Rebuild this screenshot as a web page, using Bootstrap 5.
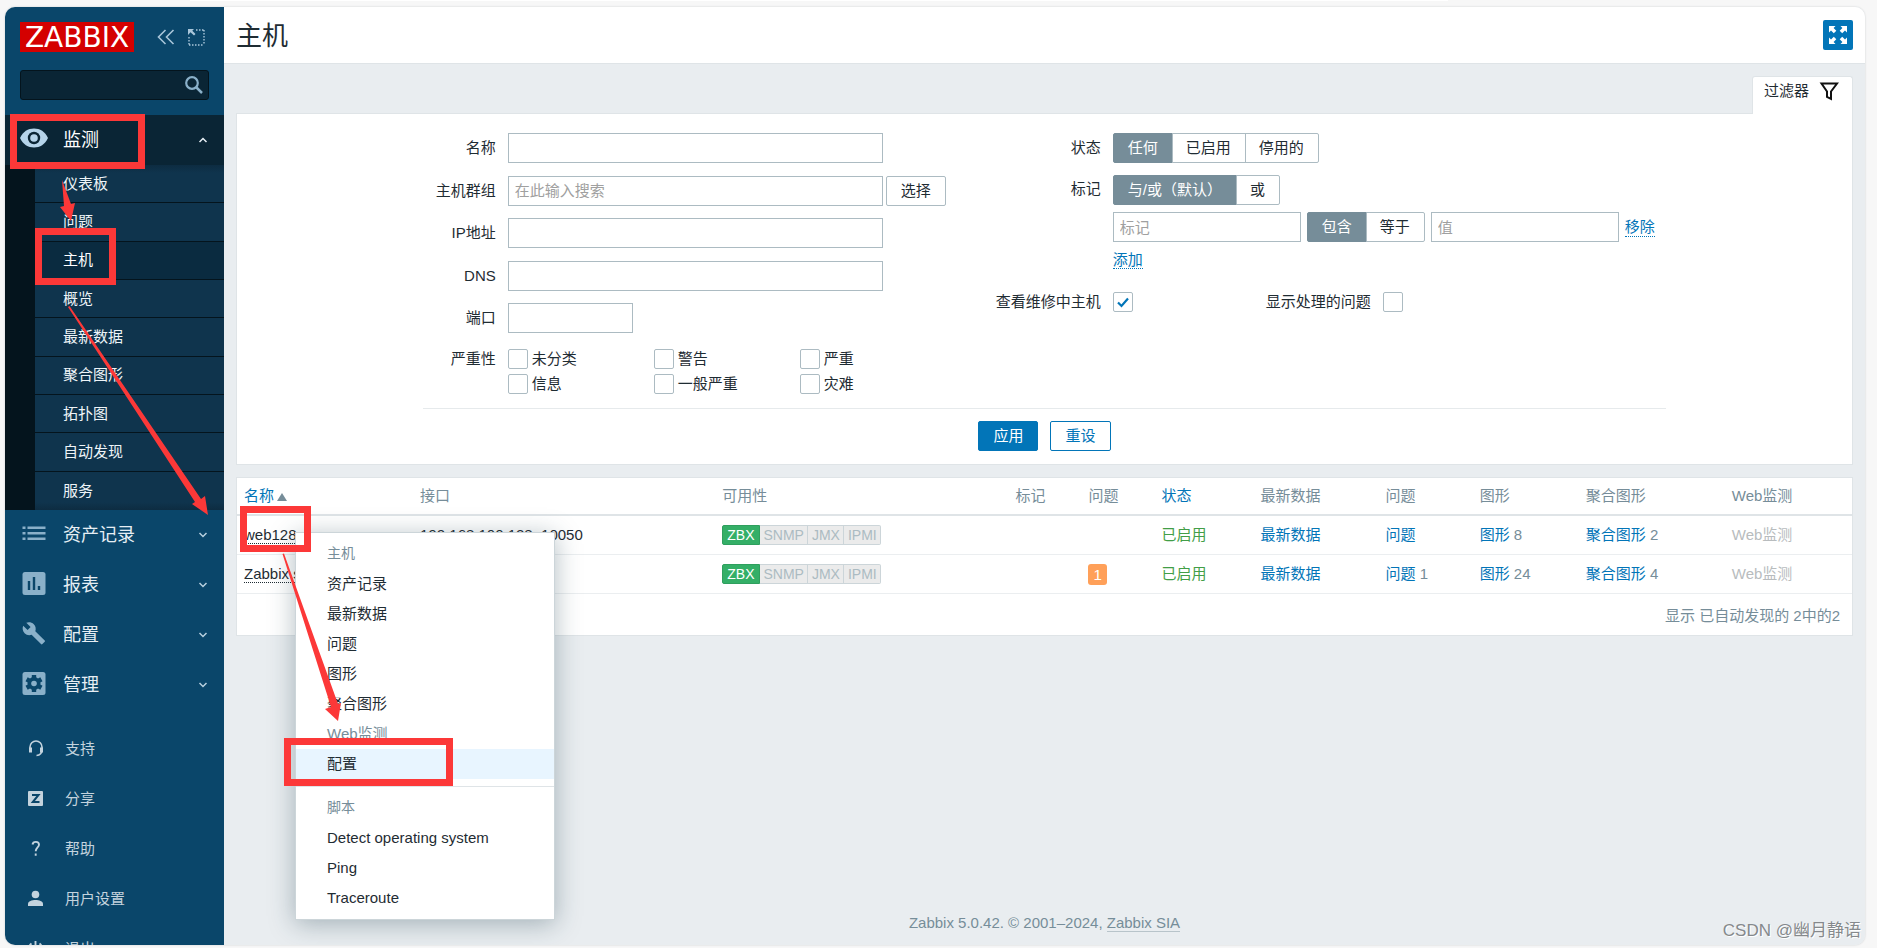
<!DOCTYPE html>
<html lang="zh-CN">
<head>
<meta charset="utf-8">
<meta name="viewport" content="width=device-width, initial-scale=1">
<title>主机</title>
<link href="https://cdn.jsdelivr.net/npm/bootstrap@5.3.0/dist/css/bootstrap.min.css" rel="stylesheet">
<style>
:root{--zline:#dfe4e7;--zlink:#0275b8;--zgrey:#768d99;--zink:#1f2c33;--zfield:#acbbc2;--zred:#fc3838}
body{font-family:"Liberation Sans","Noto Sans CJK SC",sans-serif;font-size:15px;line-height:20px;color:var(--zink);background:#f7f7f7;min-height:100vh;overflow:hidden;position:relative}
a{color:var(--zlink);text-decoration:none}
.tabstrip{position:absolute;top:0;left:190px;width:67%;height:1px;background:#fff}
.frame{position:absolute;inset:7px 12px 3px 5px;border-radius:10px;overflow:hidden;box-shadow:0 0 2px #c4c8ca}
/* sidebar */
.side{width:219px;background:#0a466a;overflow:hidden}
.brand{height:108px;padding:15px 15px 0}
.logo{width:114px;height:30px;background:#d40000;color:#fff;font:28px/31px "DejaVu Sans",sans-serif;text-align:center}
.search{width:189px;height:30px;margin-top:18px;background:#0a2535;border:1px solid #04141d;border-radius:3px}
.search input{background:none;border:0;outline:0;width:145px;color:#fff}
.menu-top{height:50px;padding:0 16px 0 15px;color:#e6eef4;font-size:18px}
.menu-top .ico{width:28px;height:28px;margin-right:15px}
.menu-top.open{background:#0a2535;color:#fff}
.submenu{min-height:345px;background:#04141d;padding-left:30px;display:grid;grid-auto-rows:1fr}
.submenu a{color:#eef4f8;background:#0f344d;padding-left:28px;border-bottom:1px solid #04141d}
.submenu a:first-child{background:linear-gradient(#0d2c41,#0f344d 8px)}
.submenu a.sel{background:#0a2b40;color:#fff}
.submenu a:last-child{border:0;background:linear-gradient(#0f344d 80%,#0d2c41)}
.menu-low{height:50px;padding-left:18px;color:#c3d3de}
.menu-low .ico{width:18px;height:18px;margin-right:20px}
/* page */
.page{background:#e9edf0;position:relative;min-width:0}
.titlebar{height:57px;background:#fff;border-bottom:1px solid var(--zline);padding:0 12px}
.titlebar h1{font-size:26px;line-height:30px;font-weight:400;margin:0;padding-top:2px}
.full{width:30px;height:30px;background:var(--zlink);border:0;border-radius:2px;padding:0}
.ftab{height:38px;margin-bottom:-1px;background:#fff;border:1px solid var(--zline);border-bottom:0;border-radius:3px 3px 0 0;padding:0 11px 9px 11px;color:var(--zink);position:relative}
.panel{background:#fff;border:1px solid var(--zline)}
.filter{height:352px;padding-top:19px}
.form-body{width:77%;margin:0 auto}
.left-col{width:561px}
.fields{height:200px}
.lab-l{width:73px;text-align:right;margin-right:12px;white-space:nowrap}
.lab-r{width:105px;text-align:right;margin-right:12px;white-space:nowrap}
.box{height:30px;border:1px solid var(--zfield);border-radius:0;padding:0 6px;font-size:15px;background:#fff;color:var(--zink)}
.box::placeholder{color:#a0a0a0}
.w375{width:375px}.w125{width:125px}.w188{width:188px}
.zbtn{height:30px;font-size:15px;line-height:20px;padding:0 14px;border:1px solid var(--zfield);border-radius:2px;background:#fff;color:var(--zink)}
.pick{margin-left:3px}
.zbtn.blue{border-color:var(--zlink);color:var(--zlink)}
.zbtn.solid{background:var(--zlink);border-color:var(--zlink);color:#fff}
.seg input{position:absolute;opacity:0;pointer-events:none}
.seg label{height:30px;padding:4px 14px 4px 13px;border:1px solid var(--zfield);margin-left:-1px;white-space:nowrap}
.seg label:first-of-type{margin-left:0;padding-left:14px;border-radius:2px 0 0 2px}
.seg label:last-of-type{border-radius:0 2px 2px 0}
.seg input:checked+label{background:var(--zgrey);border-color:var(--zgrey);color:#fff}
.tick{appearance:none;width:20px;height:20px;border:1px solid var(--zfield);border-radius:2px;background:#fff;margin:0;flex:none}
.tick:checked{background:#fff url("data:image/svg+xml,%3Csvg xmlns='http://www.w3.org/2000/svg' viewBox='0 0 18 18'%3E%3Cpath d='M4 9.5l3.5 3.5L14 5.5' fill='none' stroke='%230275b8' stroke-width='2.2'/%3E%3C/svg%3E")}
.sev{display:grid;grid-template-columns:repeat(3,146px);row-gap:5px}
.dotted{border-bottom:1px dotted var(--zlink);line-height:18px}
.rule{height:1px;background:#e6eaec}
/* data table */
.hosts{table-layout:fixed;width:100%;margin:0;white-space:nowrap}
.hosts th{font-weight:400;color:var(--zgrey);height:37px;padding:0 7px;border-bottom:2px solid var(--zline)}
.hosts td{height:39px;padding:0 7px;border-bottom:1px solid #ebeef0}
.hosts tfoot td{height:42px;border:0;text-align:right;color:var(--zgrey);padding:3px 12px 0}
.c1{width:176px}.c2{width:302px}.c3{width:293px}.c4{width:73px}.c5{width:73px}.c6{width:99px}.c7{width:125px}.c8{width:94px}.c9{width:106px}.c10{width:146px}.c11{width:127px}
.host{color:var(--zink);border-bottom:1px dotted var(--zink);line-height:18px}
.num{color:var(--zgrey)}
.off{color:#b8bcbe}
.on{color:#429e47}
.avail{font-size:14px;line-height:18px}
.avail span{background:#ebebeb;color:#acbbc2;border:1px solid #ccd5d9;border-left-width:0;padding:0 3px 0 4px}
.avail span:first-child{background:#34af67;border:1px solid #2f9f5e;color:#fff;border-radius:2px 0 0 2px;padding:0 4px}
.avail span:last-child{border-radius:0 2px 2px 0}
.sevnum{background:#ffa059;color:#fff;border-radius:3px;padding:0 5px;display:inline-block;line-height:21px;vertical-align:middle;margin-top:2px}
.foot{color:var(--zgrey);margin-bottom:12px}
.foot a{color:var(--zgrey);border-bottom:1px solid #b8c4ca}
/* context menu */
.ctx{position:absolute;left:71px;top:525px;width:260px;background:#fff;border:1px solid #ccd5d9;box-shadow:0 4px 24px rgba(31,62,76,.35);padding:6px 0;z-index:2}
.ctx a,.ctx .hd{display:block;height:30px;line-height:30px;padding-left:31px;color:var(--zink)}
.ctx .hd{font-size:14px;line-height:28px;color:var(--zgrey)}
.ctx .dis{color:var(--zgrey)}
.ctx .hov{background:#e8f5ff}
.ctx hr{margin:7px 0 6px;border-color:#dfe4e7;opacity:1}
.marks{position:absolute;inset:0;width:100%;height:100%;pointer-events:none;z-index:5}
.stamp{position:absolute;right:16px;bottom:6px;font-size:17px;line-height:22px;color:#85898c;text-shadow:1px 1px 0 #fff;z-index:6}
</style>
</head>
<body>
<div class="tabstrip"></div>
<div class="frame d-flex">
  <nav class="side flex-shrink-0">
    <div class="brand">
      <div class="d-flex align-items-center">
        <div class="logo">ZABBIX</div>
        <svg class="ms-auto" width="18" height="16" viewBox="0 0 18 16" fill="none" stroke="#a9c6da" stroke-width="1.6"><path d="M8.500 1L1.500 8l7 7M16.500 1l-7 7 7 7"/></svg>
        <svg class="me-1" width="17" height="17" viewBox="0 0 17 17" fill="none" stroke="#a9c6da" style="margin-left:13px"><path d="M8 1h9M16 1v15M1 16h15M1 8v8" stroke-width="1.400" stroke-dasharray="1.500 1.500"/><path d="M0 0h6L4.300 1.700 7.500 5 6 6.500 2.500 3.200 0 6z" fill="#a9c6da" stroke="none"/></svg>
      </div>
      <div class="search d-flex align-items-center">
        <input type="text" class="ms-2" aria-label="搜索">
        <svg class="ms-auto me-1" width="20" height="20" viewBox="0 0 20 20" fill="none" stroke="#8ab0c9"><circle cx="8" cy="8" r="5.800" stroke-width="2.200"/><path d="M12 12l6 6" stroke-width="2.500"/></svg>
      </div>
    </div>
    <a href="#" class="menu-top open d-flex align-items-center">
      <svg class="ico" viewBox="0 0 28 28"><path d="M0 12C3 5.500 8 2.500 14 2.500S25 5.500 28 12c-3 6.500-8 9.500-14 9.500S3 18.500 0 12z" fill="#b5d4ea"/><circle cx="14" cy="12" r="6.200" fill="#0a2535"/><circle cx="14" cy="12" r="3.800" fill="#b5d4ea"/></svg>
      <span>监测</span><svg class="ms-auto" width="10" height="8" viewBox="0 0 10 8" fill="none" stroke="#e6eef4" stroke-width="1.500"><path d="M1.500 6L5 2.500 8.500 6"/></svg></a>
    <div class="submenu">
      <a href="#" class="d-flex align-items-center">仪表板</a>
      <a href="#" class="d-flex align-items-center">问题</a>
      <a href="#" class="d-flex align-items-center sel">主机</a>
      <a href="#" class="d-flex align-items-center">概览</a>
      <a href="#" class="d-flex align-items-center">最新数据</a>
      <a href="#" class="d-flex align-items-center">聚合图形</a>
      <a href="#" class="d-flex align-items-center">拓扑图</a>
      <a href="#" class="d-flex align-items-center">自动发现</a>
      <a href="#" class="d-flex align-items-center">服务</a>
    </div>
    <a href="#" class="menu-top d-flex align-items-center">
      <svg class="ico" viewBox="0 0 28 28" fill="#8ab0c9"><path d="M2.500 5.500h3v2.500h-3zM2.500 11h3v2.500h-3zM2.500 16.500h3v2.500h-3zM7.500 5.500h18v2.500h-18zM7.500 11h18v2.500h-18zM7.500 16.500h18v2.500h-18z"/></svg>
      <span>资产记录</span><svg class="ms-auto" width="10" height="8" viewBox="0 0 10 8" fill="none" stroke="#b9d0df" stroke-width="1.500"><path d="M1.500 2L5 5.500 8.500 2"/></svg></a>
    <a href="#" class="menu-top d-flex align-items-center">
      <svg class="ico" viewBox="0 0 28 28"><rect x="2.500" y="1" width="23" height="23" rx="2.500" fill="#8ab0c9"/><path d="M9 10v9M14 6v13M19 15v4" stroke="#0a466a" stroke-width="2.400"/></svg>
      <span>报表</span><svg class="ms-auto" width="10" height="8" viewBox="0 0 10 8" fill="none" stroke="#b9d0df" stroke-width="1.500"><path d="M1.500 2L5 5.500 8.500 2"/></svg></a>
    <a href="#" class="menu-top d-flex align-items-center">
      <svg class="ico" viewBox="0 0 28 28"><path transform="translate(2.500 1)" d="M22.200 18.600L12.800 9.200c.9-2.400.4-5.100-1.500-7C9.200.2 6.200-.2 3.800.8l4.300 4.300-3 3L.7 3.800C-.4 6.200.1 9.200 2.100 11.200c1.900 1.900 4.600 2.400 7 1.500l9.400 9.400c.4.4 1 .4 1.400 0l2.300-2.300c.5-.4.5-1 0-1.200z" fill="#8ab0c9"/></svg>
      <span>配置</span><svg class="ms-auto" width="10" height="8" viewBox="0 0 10 8" fill="none" stroke="#b9d0df" stroke-width="1.500"><path d="M1.500 2L5 5.500 8.500 2"/></svg></a>
    <a href="#" class="menu-top d-flex align-items-center">
      <svg class="ico" viewBox="0 0 28 28"><rect x="2.500" y="1" width="23" height="23" rx="2.500" fill="#8ab0c9"/><circle cx="14" cy="12.500" r="6.500" fill="#0a466a"/><path d="M14 4v17M6.600 8.250l14.800 8.500M6.600 16.750l14.800-8.500" stroke="#0a466a" stroke-width="4.400"/><circle cx="14" cy="12.500" r="2.800" fill="#8ab0c9"/></svg>
      <span>管理</span><svg class="ms-auto" width="10" height="8" viewBox="0 0 10 8" fill="none" stroke="#b9d0df" stroke-width="1.500"><path d="M1.500 2L5 5.500 8.500 2"/></svg></a>
    <div style="margin-top:14px">
      <a href="#" class="menu-low d-flex align-items-center"><svg class="ico ms-1" viewBox="0 0 18 18" fill="none" stroke="#c3d3de"><path d="M3 9V7a6 6 0 0 1 12 0v2c0 4-1 6.500-5.500 6.500" stroke-width="1.600"/><path d="M3.500 7.500v5M14.500 7.500v5" stroke-width="3"/></svg>支持</a>
      <a href="#" class="menu-low d-flex align-items-center"><svg class="ico ms-1" viewBox="0 0 18 18"><rect x="1" y="1" width="15" height="15" rx="1" fill="#c3d3de"/><path d="M5 5h6.500L5.800 12H12.500" fill="none" stroke="#0a466a" stroke-width="2"/></svg>分享</a>
      <a href="#" class="menu-low d-flex align-items-center"><svg class="ico ms-1" viewBox="0 0 18 18" fill="none" stroke="#c3d3de" stroke-width="1.900"><path d="M5.500 4.500C6 1 12 1 12 4.700c0 2.500-3.300 3-3.300 6.500M8.700 13.500v2.200"/></svg>帮助</a>
      <a href="#" class="menu-low d-flex align-items-center"><svg class="ico ms-1" viewBox="0 0 18 18" fill="#c3d3de"><circle cx="8.500" cy="4.500" r="3.800"/><path d="M1 16v-2c0-3 4-4 7.500-4s7.500 1 7.500 4v2z"/></svg>用户设置</a>
      <a href="#" class="menu-low d-flex align-items-center"><svg class="ico ms-1" viewBox="0 0 18 18" fill="none" stroke="#c3d3de" stroke-width="1.900"><path d="M8.500 1v8M4.500 3.500a6.500 6.500 0 1 0 8 0"/></svg>退出</a>
    </div>
  </nav>

  <main class="page flex-grow-1 d-flex flex-column">
    <header class="titlebar d-flex align-items-center justify-content-between">
      <h1>主机</h1>
      <button type="button" class="full d-flex align-items-center justify-content-center" aria-label="全屏"><svg width="18" height="18" viewBox="0 0 18 18" fill="#fff"><path id="arr" d="M0 0h6.500L4.600 2 7.300 4.800 4.800 7.300 2 4.600 0 6.500z"/><use href="#arr" transform="rotate(90 9 9)"/><use href="#arr" transform="rotate(180 9 9)"/><use href="#arr" transform="rotate(270 9 9)"/></svg></button>
    </header>
    <div class="px-1 flex-grow-1 d-flex flex-column">
      <div class="mx-2 mt-2 pt-1 d-flex flex-column flex-grow-1">
        <div class="d-flex justify-content-end"><a href="#" class="ftab d-flex align-items-center">过滤器
          <svg class="ms-2" width="24" height="20" viewBox="0 0 24 20" fill="none" stroke="#111" stroke-width="2"><path d="M4.500 2.500h15.500l-6 8v7.500l-4-2v-5.500z"/></svg></a></div>
        <form class="panel filter" onsubmit="return false">
          <div class="form-body">
            <div class="d-flex">
              <div class="left-col flex-shrink-0">
                <div class="fields d-flex flex-column justify-content-between">
                  <div class="d-flex align-items-center"><label class="lab-l" for="f1">名称</label><input id="f1" class="box w375" type="text"></div>
                  <div class="d-flex align-items-center"><label class="lab-l" for="f2">主机群组</label><input id="f2" class="box w375" type="text" placeholder="在此输入搜索"><button type="button" class="zbtn pick">选择</button></div>
                  <div class="d-flex align-items-center"><label class="lab-l" for="f3">IP地址</label><input id="f3" class="box w375" type="text"></div>
                  <div class="d-flex align-items-center"><label class="lab-l" for="f4">DNS</label><input id="f4" class="box w375" type="text"></div>
                  <div class="d-flex align-items-center"><label class="lab-l" for="f5">端口</label><input id="f5" class="box w125" type="text"></div>
                </div>
                <div class="d-flex mt-3">
                  <span class="lab-l">严重性</span>
                  <div class="sev">
                    <label class="d-flex gap-1 align-items-center"><input type="checkbox" class="tick">未分类</label>
                    <label class="d-flex gap-1 align-items-center"><input type="checkbox" class="tick">警告</label>
                    <label class="d-flex gap-1 align-items-center"><input type="checkbox" class="tick">严重</label>
                    <label class="d-flex gap-1 align-items-center"><input type="checkbox" class="tick">信息</label>
                    <label class="d-flex gap-1 align-items-center"><input type="checkbox" class="tick">一般严重</label>
                    <label class="d-flex gap-1 align-items-center"><input type="checkbox" class="tick">灾难</label>
                  </div>
                </div>
              </div>
              <div style="margin-left:12px">
                <div class="d-flex align-items-center"><span class="lab-r">状态</span>
                  <div class="seg d-flex"><input type="radio" name="st" id="s1" checked><label for="s1">任何</label><input type="radio" name="st" id="s2"><label for="s2">已启用</label><input type="radio" name="st" id="s3"><label for="s3">停用的</label></div></div>
                <div class="d-flex" style="margin-top:12px"><span class="lab-r pt-1">标记</span>
                  <div>
                    <div class="seg d-flex"><input type="radio" name="tg" id="t1" checked><label for="t1">与/或（默认）</label><input type="radio" name="tg" id="t2"><label for="t2">或</label></div>
                    <div class="d-flex align-items-center" style="margin-top:7px;gap:6px">
                      <input class="box w188" type="text" placeholder="标记" aria-label="标记">
                      <div class="seg d-flex"><input type="radio" name="op" id="o1" checked><label for="o1">包含</label><input type="radio" name="op" id="o2"><label for="o2">等于</label></div>
                      <input class="box w188" type="text" placeholder="值" aria-label="值">
                      <a href="#" class="dotted text-nowrap">移除</a>
                    </div>
                    <div class="mt-2"><a href="#" class="dotted">添加</a></div>
                  </div>
                </div>
                <div class="d-flex align-items-center" style="margin-top:22px">
                  <label class="lab-r" for="m1">查看维修中主机</label><input id="m1" type="checkbox" class="tick" checked>
                  <label class="lab-r" for="m2" style="margin-left:133px">显示处理的问题</label><input id="m2" type="checkbox" class="tick">
                </div>
              </div>
            </div>
            <div class="rule" style="margin:14px 0 12px"></div>
            <div class="d-flex justify-content-center" style="gap:12px"><button type="submit" class="zbtn solid">应用</button><button type="reset" class="zbtn blue">重设</button></div>
          </div>
        </form>
        <div class="panel" style="margin-top:12px">
          <table class="hosts">
            <colgroup><col class="c1"><col class="c2"><col class="c3"><col class="c4"><col class="c5"><col class="c6"><col class="c7"><col class="c8"><col class="c9"><col class="c10"><col class="c11"></colgroup>
            <thead><tr><th><a href="#">名称 <svg width="10" height="8" viewBox="0 0 10 8" style="margin-left:-1px"><path d="M0 8L5 0l5 8z" fill="#768d99"/></svg></a></th><th>接口</th><th>可用性</th><th>标记</th><th>问题</th><th><a href="#">状态</a></th><th>最新数据</th><th>问题</th><th>图形</th><th>聚合图形</th><th>Web监测</th></tr></thead>
            <tbody>
              <tr><td><a href="#" class="host">web128</a></td><td>192.168.100.128: 10050</td><td><div class="avail d-flex"><span>ZBX</span><span>SNMP</span><span>JMX</span><span>IPMI</span></div></td><td></td><td></td><td><a href="#" class="on">已启用</a></td><td><a href="#">最新数据</a></td><td><a href="#">问题</a></td><td><a href="#">图形</a> <span class="num">8</span></td><td><a href="#">聚合图形</a> <span class="num">2</span></td><td class="off">Web监测</td></tr>
              <tr><td><a href="#" class="host">Zabbix server</a></td><td>127.0.0.1: 10050</td><td><div class="avail d-flex"><span>ZBX</span><span>SNMP</span><span>JMX</span><span>IPMI</span></div></td><td></td><td><a href="#" class="sevnum">1</a></td><td><a href="#" class="on">已启用</a></td><td><a href="#">最新数据</a></td><td><a href="#">问题</a> <span class="num">1</span></td><td><a href="#">图形</a> <span class="num">24</span></td><td><a href="#">聚合图形</a> <span class="num">4</span></td><td class="off">Web监测</td></tr>
            </tbody>
            <tfoot><tr><td colspan="11">显示 已自动发现的 2中的2</td></tr></tfoot>
          </table>
        </div>
        <footer class="foot mt-auto text-center">Zabbix 5.0.42. © 2001–2024, <a href="#">Zabbix SIA</a></footer>
      </div>
    </div>
    <div class="ctx">
      <div class="hd">主机</div>
      <a href="#">资产记录</a><a href="#">最新数据</a><a href="#">问题</a><a href="#">图形</a><a href="#">聚合图形</a><a href="#" class="dis">Web监测</a><a href="#" class="hov">配置</a>
      <hr>
      <div class="hd">脚本</div>
      <a href="#">Detect operating system</a><a href="#">Ping</a><a href="#">Traceroute</a>
    </div>
  </main>
</div>
<svg class="marks" fill="none" stroke="#fc3838" stroke-width="7">
  <rect x="13.500" y="117.500" width="128" height="48"/>
  <rect x="38.500" y="231.500" width="74" height="50"/>
  <rect x="243.500" y="509.500" width="64" height="39"/>
  <rect x="287.500" y="741.500" width="162" height="41"/>
  <g fill="#fc3838" stroke="none">
    <path d="M62 180L71 204l4-1-4 18-11-14 4-1z"/>
    <path d="M68 307l1.500-1L201 499l4-3 3 19-16-11 3-2z"/>
    <path d="M282.500 554l1.500-.5L338 704l3-1-3 18-13-12 6-2z"/>
  </g>
</svg>
<div class="stamp">CSDN @幽月静语</div>
<script src="https://cdn.jsdelivr.net/npm/bootstrap@5.3.0/dist/js/bootstrap.bundle.min.js"></script>
</body>
</html>
